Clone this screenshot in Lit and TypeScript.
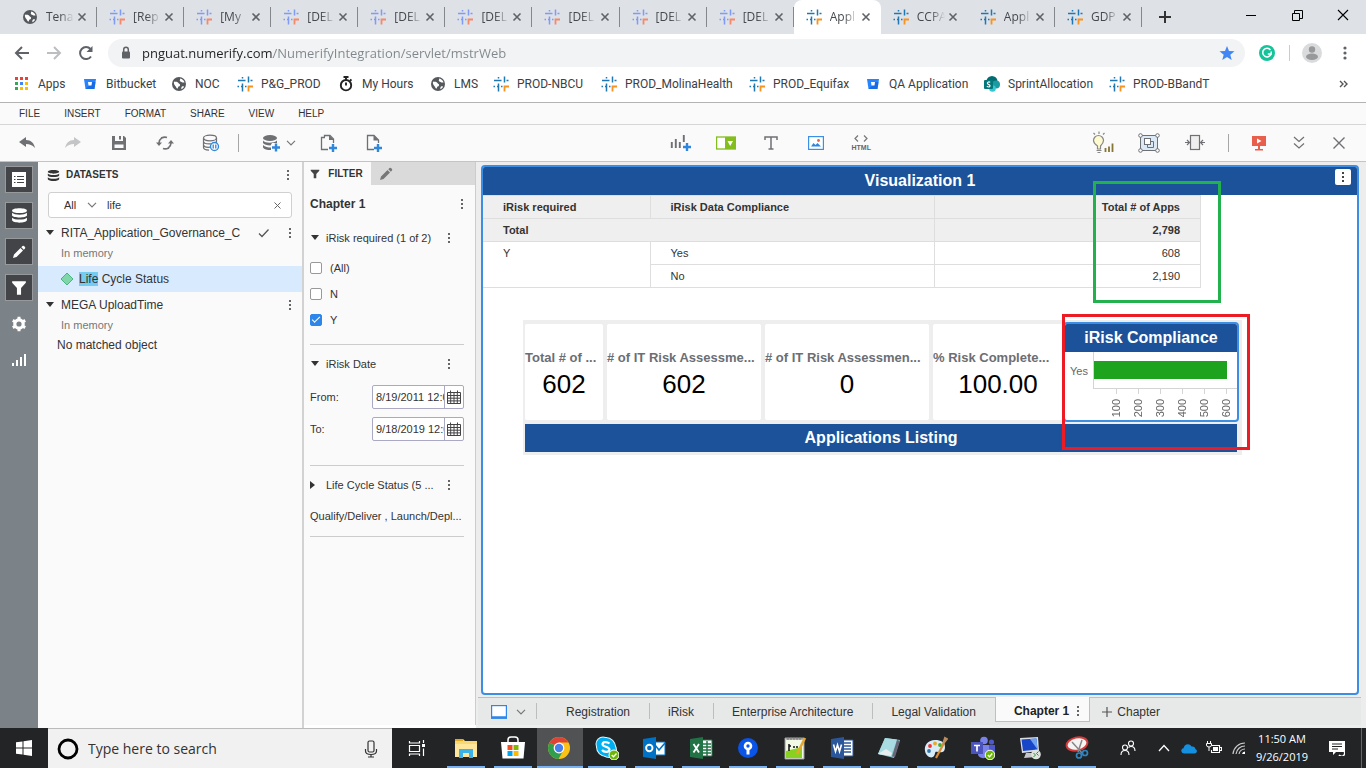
import { LitElement, html, svg, css } from "lit";
import { customElement } from "lit/decorators.js";
import { classMap } from "lit/directives/class-map.js";
import { styleMap } from "lit/directives/style-map.js";

const base = css`
  :host, * { box-sizing: border-box; }
  button, input, select {
    font: inherit; color: inherit; border: 0; margin: 0; padding: 0;
    background: none; border-radius: 0; outline: none; min-width: 0;
  }
  a { color: inherit; text-decoration: none; }
  svg { display: block; flex: none; }
  ul, ol, dl, dd, h1, h2, h3, p { margin: 0; padding: 0; list-style: none; font-weight: inherit; font-size: inherit; }
  button { display: flex; align-items: center; justify-content: center; }
`;

const pic = (w: number, h: number, body: unknown) =>
  html`<svg width=${w} height=${h} viewBox="0 0 ${w} ${h}" fill="none" aria-hidden="true">${body}</svg>`;

/* ---------- browser glyphs ---------- */
const hash = (blue = "#1f78b4", orange = "#f7931e") => pic(16, 16, svg`
  <path d="M1 4.5H8.500M5.500 1V2.500M11.500 .5V6.500M13.500 4.500H15.500M.5 10.500H2M4 10.500H5.500M5.500 7.500V15.500M8 10.500H9.500" stroke=${blue} stroke-width="1.500"/>
  <path d="M11.500 15.500V10.500H16" stroke=${orange} stroke-width="1.800"/>`);
const globe = pic(16, 16, svg`
  <circle cx="8" cy="8" r="7" fill="#55595e"/>
  <path d="M3 5.5C4.5 6 6 5 7 6.5S9.5 8 9 9.5 7 10 7 11.5 6 13 5 11 2.5 8.5 3 5.5Z" fill="#fff"/>
  <path d="M9 2.5c.5 1.5-1 2 .5 3S12 6.5 13.5 6.5C13 4.5 11.5 3 9 2.5ZM11 10.5c1.5-.5 2 0 2 .5-.6 1-1.5 1.8-2.5 2.2-.5-1 0-2.2.5-2.7Z" fill="#fff"/>`);
const bucket = pic(16, 16, svg`
  <path d="M2 3H14L12.500 13H3.500Z" fill="#2684ff"/><path d="M8 6H13.600L12.500 13H3.500l4.500-4Z" fill="#0f5bd0" opacity=".6"/>
  <path d="M6 6H10L9.500 9.500H6.500Z" fill="#fff"/>`);
const stopwatch = pic(16, 16, svg`
  <circle cx="8" cy="9.2" r="5.2" stroke="#222" stroke-width="1.9"/><path d="M5.5 1H10.5M8 1V4M12 3.5l1.500 1.300M8 6.500V9.500" stroke="#222" stroke-width="1.900"/>`);
const appsGrid = pic(16, 16, svg`${[
  ["#ea4335", 1, 1], ["#ea4335", 6, 1], ["#ea4335", 11, 1],
  ["#34a853", 1, 6], ["#4285f4", 6, 6], ["#fbbc05", 11, 6],
  ["#34a853", 1, 11], ["#fbbc05", 6, 11], ["#fbbc05", 11, 11],
].map(([c, x, y]) => svg`<rect x=${x} y=${y} width="3" height="3" fill=${c}/>`)}`);
const sharepoint = pic(16, 16, svg`
  <circle cx="8" cy="5.5" r="5.5" fill="#036c70"/><circle cx="12" cy="8.5" r="4" fill="#1a9ba1"/><circle cx="8.5" cy="12.5" r="3.3" fill="#37c6d0"/>
  <rect x="0" y="4" width="9" height="9" rx="1" fill="#03787c"/>
  <path d="M6.2 6.3C4.5 5.5 3 6.3 3.5 7.6S6.5 8.5 6 10 4 11 2.8 10.3" stroke="#fff" stroke-width="1.2"/>`);
const cross = pic(10, 10, svg`<path d="M1.5 1.5 8.5 8.5M8.5 1.5 1.5 8.5" stroke="#5f6368" stroke-width="1.6"/>`);
const dots = (c = "#666") => pic(4, 14, svg`<path d="M1 2h2v2H1ZM1 6h2v2H1ZM1 10h2v2H1Z" fill=${c}/>`);
const caretDown = pic(10, 6, svg`<path d="M1 0H9L5 5Z" fill="#333"/>`);
const caretRight = pic(6, 10, svg`<path d="M0 1 5 5 0 9Z" fill="#333"/>`);
const chevron = pic(10, 6, svg`<path d="M1 .8 5 4.8 9 .8" stroke="#777" stroke-width="1.2"/>`);

type Mark = { icon: unknown; text: string };
const tabs = [
  ["Tena", "globe"], ["[Rep", "soft"], ["[My", "soft"], ["[DEL", "soft"], ["[DEL", "soft"], ["[DEL", "soft"],
  ["[DEL", "soft"], ["[DEL", "soft"], ["[DEL", "soft"], ["Appl", "active"], ["CCPA", "hash"], ["Appl", "hash"], ["GDP", "hash"],
];
const bookmarks: Mark[] = [
  { icon: appsGrid, text: "Apps" }, { icon: bucket, text: "Bitbucket" }, { icon: globe, text: "NOC" },
  { icon: hash(), text: "P&G_PROD" }, { icon: stopwatch, text: "My Hours" }, { icon: globe, text: "LMS" },
  { icon: hash(), text: "PROD-NBCU" }, { icon: hash(), text: "PROD_MolinaHealth" }, { icon: hash(), text: "PROD_Equifax" },
  { icon: bucket, text: "QA Application" }, { icon: sharepoint, text: "SprintAllocation" }, { icon: hash(), text: "PROD-BBandT" },
];

@customElement("browser-chrome")
class BrowserChrome extends LitElement {
  static styles = [base, css`
    :host { display: block; font: 12px/16px "Open Sans", "Noto Sans", sans-serif; color: #3c4043; background: #fff; }
    .strip { display: flex; height: 34px; background: #dee1e6; }
    .tabs { display: flex; flex: 1; min-width: 0; padding-left: 10px; }
    .tab { flex: 1 1 0; min-width: 0; display: flex; align-items: center; padding: 0 8px 0 12px; position: relative; color: #45494d; }
    .tab::after { content: ""; position: absolute; right: 0; top: 7px; height: 20px; width: 1px; background: #84888d; }
    .tab.active { background: #fff; border-radius: 8px 8px 0 0; }
    .tab.active::after, .tab.quiet::after { display: none; }
    .name { flex: 1; min-width: 0; margin-left: 8px; white-space: nowrap; text-align: left; mask-image: linear-gradient(to right, #000 14px, transparent 28px); }
    .close { width: 14px; height: 16px; }
    .new { width: 28px; margin: 0 49px 0 9px; }
    .win { width: 46px; height: 30px; }
    .bar { display: flex; align-items: center; height: 38px; padding: 0 10px 0 6px; }
    .nav { width: 32px; height: 28px; }
    .omni { flex: 1; display: flex; align-items: center; gap: 8px; height: 28px; margin-left: 6px; padding: 0 10px; border-radius: 14px; background: #f1f3f4; }
    .url { flex: 1; font-size: 13px; line-height: 20px; color: transparent; background: linear-gradient(to right, #202124 131px, #80868b 131px); background-clip: text; -webkit-background-clip: text; }
    .ext { width: 44px; }
    .line { width: 1px; height: 16px; background: #ccc; }
    .more { width: 22px; }
    .marks { display: grid; grid-template-columns: 68px 89px 66px 101px 92px 63px 108px 148px 116px 119px 125px 1fr auto; align-items: center; height: 30px; padding: 0 18px 6px 14px; white-space: nowrap; font-family: Roboto, "Open Sans", sans-serif; }
    .mark { display: flex; align-items: center; gap: 8px; }
  `];
  render() {
    return html`
      <div class="strip">
        <div class="tabs">
          ${tabs.map(([text, kind]) => html`
            <div class=${classMap({ tab: true, active: kind === "active", quiet: text === "CCPA" })}>
              ${kind === "globe" ? globe : kind === "soft" ? hash("#7f9cf5", "#f58a6b") : hash()}
              <span class="name">${text}</span>
              <button class="close" aria-label="Close tab">${cross}</button>
            </div>`)}
        </div>
        <button class="new" aria-label="New tab">${pic(12, 12, svg`<path d="M6 0V12M0 6H12" stroke="#333" stroke-width="2"/>`)}</button>
        <button class="win" aria-label="Minimize">${pic(10, 10, svg`<path d="M0 5.5H10" stroke="#000"/>`)}</button>
        <button class="win" aria-label="Restore">${pic(11, 11, svg`<path d="M.5 3.5H7.5V10.5H.5ZM2.5 3V.5H10.5V8.5H8" stroke="#000"/>`)}</button>
        <button class="win" aria-label="Close">${pic(12, 12, svg`<path d="M1 1 11 11M11 1 1 11" stroke="#000" stroke-width="1.1"/>`)}</button>
      </div>
      <div class="bar">
        <button class="nav" aria-label="Back">${pic(16, 14, svg`<path d="M15 7H2M8 1 2 7 8 13" stroke="#5f6368" stroke-width="2"/>`)}</button>
        <button class="nav" aria-label="Forward">${pic(16, 14, svg`<path d="M1 7H14M8 1 14 7 8 13" stroke="#bcbec1" stroke-width="2"/>`)}</button>
        <button class="nav" aria-label="Reload">${pic(16, 16, svg`<path d="M13 11.5A6 6 0 1 1 12.5 4" stroke="#5f6368" stroke-width="2"/><path d="M14.5 1V7H8.5Z" fill="#5f6368"/>`)}</button>
        <div class="omni">
          ${pic(16, 16, svg`<rect x="4" y="6.5" width="8" height="7" rx="1" fill="#5f6368"/><path d="M5.7 7V4.5a2.3 2.3 0 0 1 4.6 0V7" stroke="#5f6368" stroke-width="1.5"/>`)}
          <input class="url" aria-label="Address" value="pnguat.numerify.com/NumerifyIntegration/servlet/mstrWeb">
          ${pic(16, 16, svg`<path d="M8 1 10 6 15.5 6.3 11.3 9.7 12.7 15 8 12 3.3 15 4.7 9.7.5 6.3 6 6Z" fill="#4285f4"/>`)}
        </div>
        <button class="ext" aria-label="Grammar check">${pic(16, 16, svg`<circle cx="8" cy="8" r="8" fill="#15c39a"/><path d="M11.5 5A4.3 4.3 0 1 0 12 9.3M12.2 6.5V9H8.8" stroke="#fff" stroke-width="1.5"/>`)}</button>
        <span class="line"></span>
        <button class="ext" aria-label="Profile">${pic(20, 20, svg`<circle cx="10" cy="10" r="10" fill="#dadbdc"/><circle cx="10" cy="6.5" r="3.2" fill="#97999b"/><ellipse cx="10" cy="13.8" rx="6" ry="3.2" fill="#97999b"/>`)}</button>
        <button class="more" aria-label="Menu">${pic(4, 14, svg`<circle cx="2" cy="2" r="1.6" fill="#5f6368"/><circle cx="2" cy="7" r="1.6" fill="#5f6368"/><circle cx="2" cy="12" r="1.6" fill="#5f6368"/>`)}</button>
      </div>
      <nav class="marks">
        ${bookmarks.map((m) => html`<a class="mark" href="#">${m.icon}<span>${m.text}</span></a>`)}
        <button aria-label="More bookmarks">${pic(9, 8, svg`<path d="M1 1 4 4 1 7M5 1 8 4 5 7" stroke="#555" stroke-width="1.4"/>`)}</button>
      </nav>`;
  }
}

/* ---------- editor toolbar ---------- */
const plus = (x: number, y: number) => svg`<path d="M${x} ${y - 4}V${y + 4}M${x - 4} ${y}H${x + 4}" stroke="#2f86dd" stroke-width="2.4"/>`;
const g = "#6e7074";
const leftTools: [string, unknown][] = [
  ["Undo", pic(18, 14, svg`<path d="M1 6 8 1V4C13 4 16 7 17 12 14 9 12 8 8 8V11Z" fill=${g}/>`)],
  ["Redo", pic(18, 14, svg`<path d="M17 6 10 1V4C5 4 2 7 1 12 4 9 6 8 10 8V11Z" fill="#c4c5c6"/>`)],
  ["Save", pic(16, 16, svg`<path d="M1 1H4V6H12V1H13L15 3V15H1ZM3.5 9.5V13H12.5V9.5Z" fill=${g} fill-rule="evenodd"/><path d="M8 1h2v3.5H8Z" fill=${g}/>`)],
  ["Refresh", pic(18, 16, svg`<path d="M3 8A6 6 0 0 1 11 2.5M15 8A6 6 0 0 1 7 13.5M5 3 6.500 2.400M13 13 11.500 13.600" stroke=${g} stroke-width="1.6"/><path d="M0 7.500H6L3 11ZM12 8.500h6L15 5Z" fill=${g}/>`)],
  ["Pause data retrieval", pic(18, 18, svg`<ellipse cx="8" cy="4" rx="6.5" ry="2.8" stroke=${g} stroke-width="1.2"/><path d="M1.5 4V13.5C1.5 15 4 16 7 16.2M14.5 4V9M1.5 7.5C2 10.5 12 11 14.5 7.5M1.5 11C2 13 5 13.5 8 13.2" stroke=${g} stroke-width="1.2"/><circle cx="12.5" cy="12.5" r="4" fill="#fff" stroke="#2f86dd" stroke-width="1.3"/><path d="M11.2 10.5V14.5M13.8 10.5V14.5" stroke="#2f86dd" stroke-width="1.3"/>`)],
];
const pageTools: [string, unknown][] = [
  ["Insert chapter", pic(20, 20, svg`<path d="M7 4.5H3.5V16.500H10M6.500 4V2.500H12L15.500 6V10" stroke=${g} stroke-width="1.3"/><path d="M11 2V7H16Z" fill=${g}/>${plus(15, 15)}`)],
  ["Insert page", pic(20, 20, svg`<path d="M10 16.5H3.5V2.5H10L14.5 7V10" stroke=${g} stroke-width="1.3"/><path d="M9.5 2V7.5H15Z" fill=${g}/>${plus(14, 15)}`)],
];
const insertTools: [string, unknown][] = [
  ["Insert visualization", pic(22, 20, svg`<path d="M1.8 9V15M5.8 6V15M9.8 9V15M13.800 2V9" stroke=${g} stroke-width="1.9"/>${plus(17, 14)}`)],
  ["Insert filter", pic(20, 14, svg`<rect x=".6" y="1" width="18.8" height="12" stroke="#84bd1e" stroke-width="1.3" fill="#fff"/><path d="M9 1H19.5V13H9Z" fill="#84bd1e"/><path d="M11.5 5H17L14.2 10Z" fill="#fff"/>`)],
  ["Insert text", pic(14, 14, svg`<path d="M1 4V1H13V4M7 1V13M4.5 13H9.5" stroke=${g} stroke-width="1.5"/>`)],
  ["Insert image", pic(16, 14, svg`<rect x=".6" y=".6" width="14.8" height="12.8" stroke="#3b8fe6" stroke-width="1.2" fill="#fff"/><path d="M3 10.5 5.5 7 7.5 9 9.5 7 13 10.5Z" fill="#2f86dd"/><circle cx="10.5" cy="4.5" r="1.4" fill="#e8604c"/>`)],
];

@customElement("editor-toolbar")
class EditorToolbar extends LitElement {
  static styles = [base, css`
    :host { display: block; font: 10px/12px "Liberation Sans", Arial, sans-serif; color: #333; background: #fafafa; border-top: 1px solid #b3b3b3; }
    .menu { display: flex; align-items: center; gap: 24px; height: 22px; padding: 0 19px; border-bottom: 1px solid #d6d6d6; }
    .tools { display: flex; align-items: center; height: 37px; padding: 0 7px 0 4px; border-bottom: 1px solid #c4c4c4; }
    .tool { width: 46px; height: 32px; }
    .insert .tool { width: 45px; }
    .group { display: flex; align-items: center; }
    .wide { flex: 4; } .narrow { flex: 3; }
    .line { width: 1px; height: 18px; background: #a6a6a6; margin: 0 4px; }
    .data { width: 52px; gap: 5px; height: 32px; margin-left: 10px; }
    .code { flex-direction: column; gap: 2px; font-size: 7px; line-height: 7px; font-weight: bold; color: #666; }
    .right .line { margin: 0 10px; }
    .small { width: 40px; height: 32px; }
  `];
  render() {
    const tool = ([name, icon]: [string, unknown]) => html`<button class="tool" aria-label=${name}>${icon}</button>`;
    return html`
      <nav class="menu">${["FILE", "INSERT", "FORMAT", "SHARE", "VIEW", "HELP"].map((t) => html`<button>${t}</button>`)}</nav>
      <div class="tools">
        <div class="group">
          ${leftTools.map(tool)}
          <span class="line"></span>
          <button class="data" aria-label="Add data">${pic(19, 18, svg`<ellipse cx="8" cy="4" rx="7" ry="3" fill=${g}/><path d="M1 6.5C3 9.5 12 9.5 15 6.5V9H10L8.5 11.5C5 11.5 2 10.5 1 9ZM1 11C3 13 6 13.5 9 13.5V16C5 16 2 15.5 1 13.5Z" fill=${g}/>${plus(14, 13.5)}`)}${chevron}</button>
          ${pageTools.map(tool)}
        </div>
        <span class="wide"></span>
        <div class="group insert">
          ${insertTools.map(tool)}
          <button class="tool code">${pic(14, 7, svg`<path d="M4 .5 1 3.5 4 6.5M10 .5 13 3.5 10 6.5" stroke="#777" stroke-width="1.2"/>`)}<span>HTML</span></button>
        </div>
        <span class="narrow"></span>
        <div class="group right">
          <button class="tool" aria-label="Ideas">${pic(22, 24, svg`<path d="M6.5 18V15C3.5 13 2.5 11.5 2.5 9.5A5 5 0 0 1 12.5 9.5C12.5 11.5 11.5 13 9.5 15V18Z" transform="translate(-1 0)" fill="#fffbd0" stroke="#888" stroke-width="1.2"/><path d="M4.5 19.5H9.5M5.5 21.5H8.5M7 .5V3M1.500 2 3 3.500M12.500 2 11 3.500" stroke="#888" stroke-width="1.2"/><path d="M13.5 17V21M17 15.5V21M20.5 12.5V21" stroke="#857637" stroke-width="1.8"/>`)}</button>
          <button class="tool" aria-label="Group">${pic(22, 20, svg`<rect x="2.5" y="2.5" width="17" height="15" fill="#dbe9f7" stroke=${g}/><rect x="6.5" y="5.5" width="6" height="6" fill="#fff" stroke=${g}/><path d="M9.5 11.5V14.5H15.5V8.5H12.5" stroke=${g}/>${[[2.5, 2.5], [19.5, 2.5], [2.5, 17.5], [19.5, 17.5]].map(([x, y]) => svg`<circle cx=${x} cy=${y} r="1.8" fill="#fff" stroke=${g}/>`)}`)}</button>
          <button class="tool" aria-label="Fit width">${pic(20, 18, svg`<rect x="5.5" y="1.5" width="9" height="14" fill="#eee" stroke=${g} stroke-width="1.2"/><path d="M0 8.5H4M2 6 4.5 8.5 2 11M20 8.5H16M18 6 15.5 8.5 18 11" stroke=${g} stroke-width="1.2"/>`)}</button>
          <span class="line"></span>
          <button class="small" aria-label="Present">${pic(16, 18, svg`<path d="M1 2H15V12H9V15H12V16.5H4V15H7V12H1Z" fill="#e8604c"/><path d="M6 4.5 10.5 7 6 9.5Z" fill="#fff"/>`)}</button>
          <button class="small" aria-label="Expand">${pic(12, 14, svg`<path d="M1 1 6 5.5 11 1M1 7.5 6 12 11 7.5" stroke=${g} stroke-width="1.2"/>`)}</button>
          <button class="small" aria-label="Close editor">${pic(14, 14, svg`<path d="M1.5 1.5 12.5 12.5M12.5 1.5 1.5 12.5" stroke=${g} stroke-width="1.4"/>`)}</button>
        </div>
      </div>`;
  }
}

/* ---------- left rail ---------- */
const stack = (s: number, c: string) => html`<svg width=${s} height=${s} viewBox="0 0 16 16" aria-hidden="true"><path d="M1 3.5C1 .5 15 .5 15 3.5S1 6.5 1 3.5ZM1 5.5C3 8 13 8 15 5.5V8C14 10.5 2 10.5 1 8ZM1 10C3 12.5 13 12.5 15 10V12.5C14 15.5 2 15.5 1 12.5Z" fill=${c}/></svg>`;
const pencil = (c: string) => pic(14, 14, svg`<path d="M1 13 2 9.5 8.5 3 11 5.5 4.5 12ZM9.3 2.2 10.5 1Q11.2.5 12 1L13 2Q13.5 2.8 13 3.5L11.8 4.7Z" fill=${c}/>`);
const funnel = (s: number, c: string) => html`<svg width=${s} height=${s} viewBox="0 0 14 14" aria-hidden="true"><path d="M1 1H13V2.5L8.8 7V13H5.2V7L1 2.5Z" fill=${c}/></svg>`;

@customElement("side-rail")
class SideRail extends LitElement {
  static styles = [base, css`
    :host { display: flex; flex-direction: column; align-items: center; gap: 9px; width: 38px; padding-top: 4px; background: #7b8288; }
    .key { width: 28px; height: 27px; }
    .on { background: #434448; border: 1px solid #97999c; }
  `];
  render() {
    const keys: [string, boolean, unknown][] = [
      ["Contents", true, pic(14, 15, svg`<path d="M0 0H14V15H0Z" fill="#fff"/><path d="M2 4.5H3.5M2 7.5H3.5M2 10.5H3.5M5 4.5H12M5 7.5H12M5 10.5H12" stroke="#434448"/>`)],
      ["Datasets", true, stack(17, "#fff")],
      ["Editor", true, pencil("#fff")],
      ["Filters", true, funnel(16, "#fff")],
      ["Settings", false, pic(16, 16, svg`<circle cx="8" cy="8" r="4.2" stroke="#fff" stroke-width="3.2"/><path d="M8 .8V3M8 13V15.2M1.8 4.4 3.7 5.5M12.3 10.5 14.2 11.6M1.8 11.6 3.7 10.5M12.3 5.5 14.2 4.4" stroke="#fff" stroke-width="3"/>`)],
      ["Charts", false, pic(16, 14, svg`<path d="M2 10V13M6 7V13M10 4V13M14 1V13" stroke="#fff" stroke-width="2"/>`)],
    ];
    return keys.map(([n, on, i]) => html`<button class=${classMap({ key: true, on })} aria-label=${n}>${i}</button>`);
  }
}

/* ---------- datasets ---------- */
@customElement("dataset-panel")
class DatasetPanel extends LitElement {
  static styles = [base, css`
    :host { display: block; width: 266px; background: #fafafa; border-right: 2px solid #d2d2d2; font: 12px/16px "Liberation Sans", Arial, sans-serif; color: #333; }
    .head { display: flex; align-items: center; gap: 6px; height: 26px; padding: 0 12px 0 9px; font-size: 10px; }
    .title { flex: 1; font-weight: bold; }
    .search { display: flex; align-items: center; height: 26px; margin: 4px 10px 2px 10px; padding: 0 9px 0 15px; font-size: 11px; background: #fff; border: 1px solid #d0d0d0; border-radius: 3px; }
    .scope { display: flex; align-items: center; width: 43px; }
    .pick { appearance: none; width: 23px; }
    .term { flex: 1; }
    .row { display: flex; align-items: center; height: 26px; padding: 0 10px 0 7px; gap: 6px; }
    .text { flex: 1; min-width: 0; white-space: nowrap; }
    .tick { margin-right: 12px; }
    .note { font-size: 11px; line-height: 14px; padding-left: 23px; color: #777; }
    .hit { display: flex; align-items: center; gap: 5px; height: 26px; margin-top: 6px; padding-left: 22px; background: #d8eafe; }
    mark { color: inherit; background: #73cdf3; }
    .none { line-height: 26px; padding-left: 19px; }
  `];
  render() {
    return html`
      <div class="head">${stack(13, "#333")}<h2 class="title">DATASETS</h2><button aria-label="Dataset options">${dots()}</button></div>
      <div class="search">
        <label class="scope"><select class="pick" aria-label="Scope"><option>All</option></select>${chevron}</label>
        <input class="term" aria-label="Search datasets" value="life">
        <button aria-label="Clear search">${pic(9, 9, svg`<path d="M1.5 1.5 7.5 7.5M7.5 1.5 1.5 7.5" stroke="#666"/>`)}</button>
      </div>
      <div class="row">${caretDown}<span class="text">RITA_Application_Governance_C</span><span class="tick">${pic(12, 10, svg`<path d="M1 5.5 4 8.5 10.5 1.5" stroke="#555" stroke-width="1.3"/>`)}</span><button aria-label="Options">${dots()}</button></div>
      <p class="note">In memory</p>
      <div class="hit">${pic(14, 14, svg`<path d="M7 1 13 7 7 13 1 7Z" fill="#7fd6a9" stroke="#4cb387"/>`)}<span><mark>Life</mark> Cycle Status</span></div>
      <div class="row">${caretDown}<span class="text">MEGA UploadTime</span><button aria-label="Options">${dots()}</button></div>
      <p class="note">In memory</p>
      <p class="none">No matched object</p>`;
  }
}

/* ---------- filter ---------- */
@customElement("filter-panel")
class FilterPanel extends LitElement {
  static styles = [base, css`
    :host { display: block; width: 172px; margin-bottom: 3px; background: #fafafa; border-right: 1px solid #ccc; font: 11px/14px "Liberation Sans", Arial, sans-serif; color: #333; }
    .tabs { display: flex; height: 23px; background: #dadada; }
    .tab { gap: 8px; width: 67px; font-size: 10px; font-weight: bold; background: #fafafa; padding-right: 2px; }
    .edit { width: 30px; }
    .chapter { display: flex; align-items: center; justify-content: space-between; height: 38px; padding: 0 11px 0 6px; font-size: 12px; font-weight: bold; }
    .body { padding: 0 11px 0 6px; }
    .head { display: flex; align-items: center; height: 30px; padding-right: 13px; }
    .mark { width: 16px; }
    .name { flex: 1; min-width: 0; white-space: nowrap; }
    .group { border-bottom: 1px solid #ccc; }
    .opt { display: flex; align-items: center; gap: 8px; height: 26px; }
    .box { appearance: none; width: 12px; height: 12px; border: 1px solid #999; border-radius: 2px; background: #fff; display: grid; place-items: center; }
    .box:checked { background: #2f86ea; border-color: #2f86ea; }
    .box:checked::after { content: ""; width: 7px; height: 3px; border: solid #fff; border-width: 0 0 1px 1px; transform: rotate(-45deg) translate(1px, -1px); }
    .checks { padding: 2px 0 11px; }
    .dates { padding: 2px 0 20px; }
    .date { display: flex; align-items: center; height: 32px; }
    .lab { flex: 1; }
    .field { display: flex; width: 92px; height: 24px; border: 1px solid #a9a9c4; border-radius: 2px; background: #fff; }
    .when { width: 72px; padding: 0 0 0 3px; border-right: 1px solid #a9a9c4; }
    .cal { flex: 1; }
    .last { padding-top: 4px; }
    .value { line-height: 32px; height: 36px; overflow: hidden; white-space: nowrap; }
  `];
  render() {
    const cal = pic(14, 14, svg`<path d="M.5 2.5H13.5V13.5H.5ZM.5 5.5H13.5M.5 8.2H13.5M.5 10.9H13.5M3.7 2.5V13.5M7 2.5V13.5M10.3 2.5V13.5M3.5.5V3M10.5.5V3" stroke="#444"/>`);
    return html`
      <div class="tabs"><button class="tab">${funnel(10, "#444")}FILTER</button><button class="edit" aria-label="Edit">${pencil("#777")}</button></div>
      <div class="chapter"><h2>Chapter 1</h2><button aria-label="Chapter options">${dots()}</button></div>
      <div class="body">
        <section class="group">
          <div class="head"><span class="mark">${caretDown}</span><h3 class="name">iRisk required (1 of 2)</h3><button aria-label="Options">${dots()}</button></div>
          <div class="checks">
            ${["(All)", "N", "Y"].map((t) => html`<label class="opt"><input class="box" type="checkbox" ?checked=${t === "Y"}>${t}</label>`)}
          </div>
        </section>
        <section class="group last">
          <div class="head"><span class="mark">${caretDown}</span><h3 class="name">iRisk Date</h3><button aria-label="Options">${dots()}</button></div>
          <div class="dates">
            ${[["From:", "8/19/2011 12:00:00 AM"], ["To:", "9/18/2019 12:00:00 AM"]].map(([l, v]) => html`
              <div class="date"><label class="lab" for=${l}>${l}</label><div class="field"><input class="when" id=${l} value=${v}><button class="cal" aria-label="Open calendar">${cal}</button></div></div>`)}
          </div>
        </section>
        <section class="group last">
          <div class="head"><span class="mark">${caretRight}</span><h3 class="name">Life Cycle Status (5 ...</h3><button aria-label="Options">${dots()}</button></div>
          <p class="value">Qualify/Deliver , Launch/Depl...</p>
        </section>
      </div>`;
  }
}

/* ---------- dashboard ---------- */
@customElement("dashboard-view")
class DashboardView extends LitElement {
  static styles = [base, css`
    :host { display: flex; flex-direction: column; flex: 1; min-width: 0; padding: 3px 5px 3px 2px; background: #ededed; font: 12px/14px "Liberation Sans", Arial, sans-serif; color: #333; }
    .canvas { position: relative; flex: 1; margin: 0 2px 2px 3px; background: #fff; border: 2px solid #3b8ee4; border-radius: 4px; overflow: hidden; }
    .banner { display: flex; align-items: center; justify-content: center; height: 28px; background: #1b5299; color: #fff; font-size: 16px; line-height: 20px; font-weight: bold; }
    .opts { position: absolute; top: 2px; right: 6px; width: 16px; height: 16px; background: #fff; border-radius: 2px; }
    .grid { border-collapse: collapse; table-layout: fixed; width: 718px; font-size: 11px; }
    .grid th, .grid td { height: 23px; padding: 0 20px; border: 1px solid #dedede; border-left: 0; text-align: left; font-weight: normal; }
    .grid .strong th, .grid .strong td { background: #efefef; font-weight: bold; }
    .grid .num { text-align: right; }
    .grid .top { vertical-align: top; padding-top: 4px; }
    .c1 { width: 167px; } .c2 { width: 284px; }
    .board { width: 719px; margin: 32px 0 0 40px; padding: 4px 5px 3px 2px; background: #eee; }
    .cards { display: grid; grid-template-columns: 78px 154px 164px 130px 1fr; column-gap: 4px; height: 96px; }
    .card { display: flex; flex-direction: column; justify-content: center; align-items: center; background: #fff; border-radius: 2px; padding-top: 7px; }
    .label { align-self: stretch; font-size: 13px; font-weight: bold; color: #6b6e74; white-space: nowrap; line-height: 16px; }
    .value { font-size: 26px; line-height: 36px; color: #000; }
    .chart { display: grid; grid-template-rows: 28px 37px 1fr; grid-template-columns: 28px 1fr; margin: -2px -2px -2px -4px; border: 2px solid #3b8ee4; border-radius: 4px; background: #fff; overflow: hidden; }
    .chart .banner { grid-column: 1 / -1; }
    .cat { align-self: center; font-size: 11px; color: #666; padding-left: 5px; }
    .plot { display: flex; align-items: center; border-left: 1px solid #d4d4d4; border-bottom: 1px solid #d4d4d4; }
    .bar { height: 18px; background: #1ea31e; }
    .axis { grid-column: 2; display: grid; grid-template-columns: repeat(6, 22px); padding-left: 12px; }
    .tick { display: flex; flex-direction: column; align-items: center; }
    .tick::before { content: ""; height: 5px; width: 1px; margin-bottom: 5px; background: #d4d4d4; }
    .tick span { writing-mode: vertical-rl; rotate: 180deg; font-size: 11px; line-height: 12px; color: #666; }
    .listing { margin-top: 4px; }
    .frame { position: absolute; border: 3px solid; pointer-events: none; }
    .green { left: 610px; top: 14px; width: 128px; height: 122px; border-color: #22b14c; }
    .red { left: 579px; top: 147px; width: 188px; height: 136px; border-color: #ed1c24; }
    .sheets { display: flex; align-items: stretch; height: 28px; background: #e7e8e8; border-top: 1px solid #bfbfbf; }
    .view { gap: 9px; width: 59px; margin-right: 12px; padding-left: 1px; }
    .sheet { padding: 0 19px; position: relative; white-space: nowrap; }
    .sheet:not(.on):not(.add)::before { content: ""; position: absolute; left: 0; top: 5px; width: 1px; height: 16px; background: #bdbdbd; }
    .first { padding-left: 30px; margin-left: -13px; }
    .on { margin-top: -1px; height: 25px; gap: 7px; padding: 4px 9px 0 18px; background: #fafafa; border: 1px solid #bfbfbf; border-top: 0; color: #222; font-weight: bold; }
    .add { padding: 0 12px; gap: 5px; }
  `];
  render() {
    const cards = [["Total # of ...", "602"], ["# of IT Risk Assessme...", "602"], ["# of IT Risk Assessmen...", "0"], ["% Risk Complete...", "100.00"]];
    return html`
      <div class="canvas">
        <h2 class="banner">Visualization 1</h2>
        <button class="opts" aria-label="Visualization options">${dots("#444")}</button>
        <table class="grid">
          <colgroup><col class="c1"><col class="c2"><col></colgroup>
          <tr class="strong"><th scope="col">iRisk required</th><th scope="col">iRisk Data Compliance</th><th scope="col" class="num">Total # of Apps</th></tr>
          <tr class="strong"><th scope="row" colspan="2">Total</th><td class="num">2,798</td></tr>
          <tr><th scope="row" rowspan="2" class="top">Y</th><td>Yes</td><td class="num">608</td></tr>
          <tr><td>No</td><td class="num">2,190</td></tr>
        </table>
        <div class="board">
          <div class="cards">
            ${cards.map(([l, v]) => html`<div class="card"><span class="label">${l}</span><span class="value">${v}</span></div>`)}
            <section class="chart">
              <h3 class="banner">iRisk Compliance</h3>
              <span class="cat">Yes</span>
              <div class="plot"><div class="bar" style=${styleMap({ width: `${(602 / 645) * 100}%` })}></div></div>
              <div class="axis">${[100, 200, 300, 400, 500, 600].map((n) => html`<div class="tick"><span>${n}</span></div>`)}</div>
            </section>
          </div>
          <h3 class="banner listing">Applications Listing</h3>
        </div>
        <div class="frame green"></div>
        <div class="frame red"></div>
      </div>
      <nav class="sheets">
        <button class="view" aria-label="Page view">${pic(16, 14, svg`<rect x=".6" y=".6" width="14.8" height="12.5" fill="#fff" stroke="#2f86ea" stroke-width="1.2"/><path d="M0 12.5H16" stroke="#2f86ea" stroke-width="2.5"/>`)}${chevron}</button>
        <button class="sheet first">Registration</button><button class="sheet">iRisk</button><button class="sheet">Enterprise Architecture</button><button class="sheet">Legal Validation</button>
        <button class="sheet on">Chapter 1${dots("#666")}</button>
        <button class="sheet add">${pic(10, 10, svg`<path d="M5 0V10M0 5H10" stroke="#555" stroke-width="1.2"/>`)}Chapter</button>
      </nav>`;
  }
}

/* ---------- taskbar ---------- */
const win = (body: unknown) => pic(24, 24, body);
const taskIcons: [string, unknown][] = [
  ["File Explorer", win(svg`<path d="M1 3H9L11 5H23V21H1Z" fill="#f8d775"/><path d="M1 3H9V5H1Z" fill="#e5a823"/><path d="M1 8H23V21H1Z" fill="#ffe69a"/><path d="M5 13H19V22H15V17H9V22H5Z" fill="#3bb3e6"/>`)],
  ["Store", win(svg`<path d="M7 7V4Q7 1 10 1H14Q17 1 17 4V7" stroke="#fff" stroke-width="1.5"/><path d="M0 6H24L22.5 22.5H1.5Z" fill="#fff"/><path d="M6.5 9H11.5V14H6.5Z" fill="#f25022"/><path d="M12.5 9H17.5V14H12.5Z" fill="#7fba00"/><path d="M6.5 15H11.5V20H6.5Z" fill="#00a4ef"/><path d="M12.5 15H17.5V20H12.5Z" fill="#ffb900"/>`)],
  ["Chrome", win(svg`<circle cx="12" cy="12" r="11" fill="#fbc116"/><path d="M12 12 2.5 6.5A11 11 0 0 1 21.5 6.5H12Z" fill="#de4336"/><path d="M12 12 2.5 6.5A11 11 0 0 0 11.5 23L16.5 14Z" fill="#2f9e4f"/><circle cx="12" cy="12" r="5.4" fill="#fff"/><circle cx="12" cy="12" r="4.2" fill="#4a80ec"/>`)],
  ["Skype", win(svg`<circle cx="8" cy="8" r="7.500" fill="#dff4fc"/><circle cx="14" cy="14" r="8" fill="#dff4fc"/><circle cx="11" cy="11" r="10" fill="#dff4fc"/><circle cx="8" cy="8" r="6.5" fill="#00aff0"/><circle cx="14" cy="14" r="7" fill="#00aff0"/><circle cx="11" cy="11" r="9" fill="#00aff0"/><path d="M14.500 7.500C12 5.500 7.500 5.500 7.500 8.200S14.500 10.500 14.500 13.500 9 16.500 7 14" stroke="#fff" stroke-width="2.2"/><circle cx="19" cy="19" r="5" fill="#6bb700" stroke="#fff"/><path d="M16.7 19 18.5 20.8 21.5 17.5" stroke="#fff" stroke-width="1.3"/>`)],
  ["Outlook", win(svg`<path d="M11 6H23V19H11Z" fill="#fff" stroke="#0072c6"/><path d="M13 9 17 14 23 7" stroke="#0072c6" stroke-width="1.6"/><path d="M1 3 14 1V23L1 21Z" fill="#0072c6"/><circle cx="7.3" cy="12" r="3.2" stroke="#fff" stroke-width="1.9"/>`)],
  ["Excel", win(svg`<path d="M12 4H23V20H12Z" fill="#fff" stroke="#217346"/><path d="M13 8H22M13 11H22M13 14H22M13 17H22M18 5V20" stroke="#217346" stroke-width="1.5"/><path d="M1 3 14 1V23L1 21Z" fill="#217346"/><path d="M4.5 8 10 16.5M10 8 4.5 16.5" stroke="#fff" stroke-width="1.8"/>`)],
  ["Sourcetree", win(svg`<circle cx="12" cy="12" r="10" fill="#0b54e8"/><circle cx="12" cy="10" r="3" stroke="#fff" stroke-width="2.6"/><path d="M12 14V18.5" stroke="#fff" stroke-width="3"/>`)],
  ["Notepad++", win(svg`<path d="M2 2H21V23H2Z" fill="#f3f9e7" stroke="#999"/><path d="M3 15 19 11V22H3Z" fill="#88d21f"/><path d="M3 3H20M5 1V4M8 1V4M11 1V4M14 1V4M17 1V4" stroke="#777"/><path d="M6 8V15M6 10H8M10 11H12M13 11H15" stroke="#111" stroke-width="1.5"/><path d="M14 18 22 2" stroke="#e7a72f" stroke-width="2.5"/>`)],
  ["Word", win(svg`<path d="M12 4H23V20H12Z" fill="#fff" stroke="#2b579a"/><path d="M14 7H21M14 10H21M14 13H21M14 16H21" stroke="#2b579a" stroke-width="1.4"/><path d="M1 3 14 1V23L1 21Z" fill="#2b579a"/><path d="M3.5 8.5 5.5 15.5 7.5 9 9.5 15.5 11.5 8.5" stroke="#fff" stroke-width="1.6"/>`)],
  ["Notes", win(svg`<path d="M8 2 23 4 17 22 1 18Z" fill="#8fc6cf"/><path d="M8 2 20 3.5 14 20 1 18Z" fill="#a9dbe2"/><path d="M1 18 9 13 15 17 14 20Z" fill="#e6eef0"/><path d="M20 4 23 5 18 21 15 20.5Z" fill="#667"/>`)],
  ["Paint", win(svg`<path d="M11 4C4 4 0 9 1 15S8 23 10 20 10 15 14 16 21 16 21 11 17 4 11 4Z" fill="#d7ecf7"/><circle cx="6" cy="10" r="1.9" fill="#e33"/><circle cx="11" cy="7.5" r="1.9" fill="#e9a92b"/><circle cx="5" cy="15" r="1.9" fill="#37a"/><circle cx="16" cy="9" r="1.9" fill="#4a3"/><path d="M12 22 20 7" stroke="#d98a32" stroke-width="2.2"/><path d="M19 8 21 2 23 3Z" fill="#b98d5f" stroke="#b98d5f" stroke-width="2"/>`)],
  ["Teams", win(svg`<circle cx="13" cy="4.5" r="3.8" fill="#7b83eb"/><circle cx="20.5" cy="6" r="2.6" fill="#5059c9"/><path d="M16 9H24V16Q22 19 18 18Z" fill="#5059c9"/><path d="M7 9H18V17Q16 23 11 22T7 16Z" fill="#7b83eb"/><path d="M0 6H12V18H0Z" fill="#4b53bc"/><path d="M3 9.5H9M6 9.5V15.5" stroke="#fff" stroke-width="1.7"/><circle cx="19" cy="19" r="4.8" fill="#6bb700" stroke="#fff"/><path d="M16.8 19 18.5 20.7 21.3 17.5" stroke="#fff" stroke-width="1.3"/>`)],
  ["Remote Desktop", win(svg`<path d="M2 2 20 1 21 15 4 17Z" fill="#d9dde2"/><path d="M3.5 3.5 18.5 2.5 19.5 13.5 5 15Z" fill="#1746c8"/><path d="M12 3 18.5 2.5 19.5 13.5Z" fill="#6ea2f0"/><path d="M8 17H15L18 21 6 22Z" fill="#c4c8cc"/><circle cx="18" cy="18.5" r="4.8" fill="#dde3dd"/><path d="M15.5 17 17.5 19 15.5 21M20.5 15.5 18.5 17.5 20.5 19.5" stroke="#3b8a3b"/>`)],
  ["Snipping Tool", win(svg`<ellipse cx="12" cy="8" rx="10.5" ry="6.5" fill="#f4f4f4" stroke="#d33c3c" stroke-width="2" transform="rotate(-12 12 8)"/><path d="M7 6 17 17M17 4 13 16" stroke="#888" stroke-width="1.5"/><circle cx="14" cy="19.5" r="2.5" stroke="#2f86c4" stroke-width="1.7"/><circle cx="20" cy="17" r="2.5" stroke="#2f86c4" stroke-width="1.7"/>`)],
];

@customElement("task-bar")
class TaskBar extends LitElement {
  static styles = [base, css`
    :host { display: flex; height: 40px; background: #222426; color: #fff; font: 11px/18px "Open Sans", "Noto Sans", sans-serif; }
    .start { width: 48px; }
    .search { display: flex; align-items: center; gap: 9px; width: 344px; padding: 0 14px 0 9px; background: #f1f1f1; border-top: 1px solid #bbb; }
    .query { flex: 1; font-size: 14px; line-height: 20px; }
    .query::placeholder { color: #333; opacity: 1; }
    .tv { width: 50px; }
    .apps { display: flex; }
    .app { width: 38px; height: 40px; margin-right: 9px; border-bottom: 2px solid #76b2f5; padding-top: 1px; }
    .app:first-child { margin-left: 5px; }
    .app.now { width: 46px; margin: 0 5px 0 -4px; background: #505254; padding-right: 2px; }
    .tray { display: flex; align-items: center; margin-left: auto; }
    .ico { width: 25px; height: 40px; }
    .people { width: 46px; }
    .clock { width: 62px; text-align: center; white-space: nowrap; }
    .action { width: 48px; height: 40px; }
    .peek { width: 5px; height: 40px; border-left: 1px solid #666; }
  `];
  render() {
    const b = (cls: string, name: string, i: unknown) => html`<button class=${cls} aria-label=${name}>${i}</button>`;
    return html`
      ${b("start", "Start", pic(16, 16, svg`<path d="M0 2.3 6.5 1.4V7.5H0ZM7.5 1.2 16 0V7.5H7.5ZM0 8.5H6.5V14.6L0 13.7ZM7.5 8.5H16V16L7.5 14.8Z" fill="#fff"/>`))}
      <div class="search">
        ${pic(22, 22, svg`<circle cx="11" cy="11" r="9" stroke="#000" stroke-width="2.8"/>`)}
        <input class="query" aria-label="Search" placeholder="Type here to search">
        ${pic(14, 18, svg`<rect x="4" y="1" width="6" height="11" rx="1.5" stroke="#333" stroke-width="1.2"/><path d="M1.5 9V11Q1.5 14.5 7 14.5T12.5 11V9M7 14.5V17M4 17H10" stroke="#333" stroke-width="1.2"/>`)}
      </div>
      ${b("tv", "Task view", pic(18, 16, svg`<path d="M1.5 5.5H11.5V11.5H1.5ZM1.5 1V3H11.5V1M1.5 16V14H11.5V16M15.5 0V3M15.5 8.5V16" stroke="#fff" stroke-width="1.2"/><path d="M14 4H17V7H14Z" fill="#fff"/>`))}
      <div class="apps">${taskIcons.map(([n, i]) => html`<button class=${classMap({ app: true, now: n === "Chrome" })} aria-label=${n}>${i}</button>`)}</div>
      <div class="tray">
        ${b("people", "People", pic(16, 16, svg`<circle cx="11" cy="3.5" r="2.5" stroke="#fff" stroke-width="1.1"/><circle cx="5" cy="7.5" r="2.5" stroke="#fff" stroke-width="1.1"/><path d="M1 15Q1 10.5 5 10.5T9 15M8.5 7.5Q9.5 6.5 11 6.5 15 6.5 15 11" stroke="#fff" stroke-width="1.1"/>`))}
        ${b("ico", "Hidden icons", pic(12, 8, svg`<path d="M1 7 6 1.5 11 7" stroke="#fff" stroke-width="1.3"/>`))}
        ${b("ico", "OneDrive", pic(16, 12, svg`<path d="M3.5 11.5C0 11.5-1 7 2.5 6.3 3 2 8.5.5 10.5 4.5 13 4 14.5 5.5 14.3 7 17 8 16 11.5 13.5 11.5Z" fill="#1490df"/>`))}
        ${b("ico", "Battery", pic(16, 14, svg`<path d="M5.5 4.5H13.5V11.5H5.5V9M13.5 6.5H15.5V9.5H13.5" stroke="#fff" stroke-width="1.1"/><path d="M7 6H12V10H7Z" fill="#fff"/><path d="M1.5 0V2M4.5 0V2M.5 2.5H5.5V4Q5.5 6 3 6 .5 6 .5 4ZM3 6V10" stroke="#fff"/>`))}
        ${b("ico", "Network", pic(14, 14, svg`<path d="M1 13A12 12 0 0 1 13 2M4 13A9 9 0 0 1 13 5M7 13A6 6 0 0 1 13 8" stroke="#ccc" stroke-width="1.2"/><path d="M10 13A3 3 0 0 1 13 10.5V13Z" fill="#fff"/>`))}
        <div class="clock"><div>11:50 AM</div><div>9/26/2019</div></div>
        ${b("action", "Notifications", pic(16, 16, svg`<path d="M0 1H16V12H7L4 15V12H0Z" fill="#fff"/><path d="M3 4H13M3 6.5H13M3 9H9" stroke="#222426" stroke-width="1.2"/><path d="M10 15A3 3 0 0 0 15 11" stroke="#fff" stroke-width="1.5"/>`))}
        <span class="peek"></span>
      </div>`;
  }
}

@customElement("app-root")
class AppRoot extends LitElement {
  static styles = css`
    :host { display: flex; flex-direction: column; height: 100vh; overflow: hidden; background: #fff; }
    .work { display: flex; flex: 1; min-height: 0; }
  `;
  render() {
    return html`
      <browser-chrome></browser-chrome>
      <editor-toolbar></editor-toolbar>
      <div class="work">
        <side-rail></side-rail>
        <dataset-panel></dataset-panel>
        <filter-panel></filter-panel>
        <dashboard-view></dashboard-view>
      </div>
      <task-bar></task-bar>`;
  }
}
